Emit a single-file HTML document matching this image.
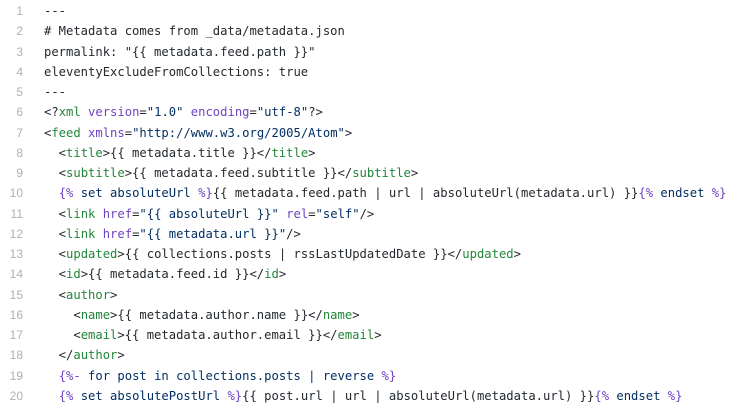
<!DOCTYPE html>
<html><head><style>
body{margin:0;background:#fff;width:750px;height:411px;overflow:hidden}
.c{font-family:"DejaVu Sans Mono",monospace;font-size:12.2px;color:#24292e;padding-top:1px}
.l{height:20.26px;line-height:20.26px;white-space:pre;position:relative}
.n{position:absolute;left:0;width:23px;text-align:right;color:#b0b0b0;font-family:"Liberation Sans",sans-serif;font-size:12px}
.t{position:absolute;left:44px}
.g{color:#22863a}.p{color:#6f42c1}.s{color:#032f62}
</style></head><body><div class="c">
<div class="l"><span class="n">1</span><span class="t">---</span></div>
<div class="l"><span class="n">2</span><span class="t"># Metadata comes from _data/metadata.json</span></div>
<div class="l"><span class="n">3</span><span class="t">permalink: "{{ metadata.feed.path }}"</span></div>
<div class="l"><span class="n">4</span><span class="t">eleventyExcludeFromCollections: true</span></div>
<div class="l"><span class="n">5</span><span class="t">---</span></div>
<div class="l"><span class="n">6</span><span class="t">&lt;?<span class="g">xml</span> <span class="p">version</span>=<span class="s">"1.0"</span> <span class="p">encoding</span>=<span class="s">"utf-8"</span>?&gt;</span></div>
<div class="l"><span class="n">7</span><span class="t">&lt;<span class="g">feed</span> <span class="p">xmlns</span>=<span class="s">"http://www.w3.org/2005/Atom"</span>&gt;</span></div>
<div class="l"><span class="n">8</span><span class="t">  &lt;<span class="g">title</span>&gt;{{ metadata.title }}&lt;/<span class="g">title</span>&gt;</span></div>
<div class="l"><span class="n">9</span><span class="t">  &lt;<span class="g">subtitle</span>&gt;{{ metadata.feed.subtitle }}&lt;/<span class="g">subtitle</span>&gt;</span></div>
<div class="l"><span class="n">10</span><span class="t">  <span class="p">{%</span><span class="s"> set absoluteUrl </span><span class="p">%}</span>{{ metadata.feed.path | url | absoluteUrl(metadata.url) }}<span class="p">{%</span><span class="s"> endset </span><span class="p">%}</span></span></div>
<div class="l"><span class="n">11</span><span class="t">  &lt;<span class="g">link</span> <span class="p">href</span>=<span class="s">"{{ absoluteUrl }}"</span> <span class="p">rel</span>=<span class="s">"self"</span>/&gt;</span></div>
<div class="l"><span class="n">12</span><span class="t">  &lt;<span class="g">link</span> <span class="p">href</span>=<span class="s">"{{ metadata.url }}"</span>/&gt;</span></div>
<div class="l"><span class="n">13</span><span class="t">  &lt;<span class="g">updated</span>&gt;{{ collections.posts | rssLastUpdatedDate }}&lt;/<span class="g">updated</span>&gt;</span></div>
<div class="l"><span class="n">14</span><span class="t">  &lt;<span class="g">id</span>&gt;{{ metadata.feed.id }}&lt;/<span class="g">id</span>&gt;</span></div>
<div class="l"><span class="n">15</span><span class="t">  &lt;<span class="g">author</span>&gt;</span></div>
<div class="l"><span class="n">16</span><span class="t">    &lt;<span class="g">name</span>&gt;{{ metadata.author.name }}&lt;/<span class="g">name</span>&gt;</span></div>
<div class="l"><span class="n">17</span><span class="t">    &lt;<span class="g">email</span>&gt;{{ metadata.author.email }}&lt;/<span class="g">email</span>&gt;</span></div>
<div class="l"><span class="n">18</span><span class="t">  &lt;/<span class="g">author</span>&gt;</span></div>
<div class="l"><span class="n">19</span><span class="t">  <span class="p">{%-</span><span class="s"> for post in collections.posts | reverse </span><span class="p">%}</span></span></div>
<div class="l"><span class="n">20</span><span class="t">  <span class="p">{%</span><span class="s"> set absolutePostUrl </span><span class="p">%}</span>{{ post.url | url | absoluteUrl(metadata.url) }}<span class="p">{%</span><span class="s"> endset </span><span class="p">%}</span></span></div>
</div></body></html>
